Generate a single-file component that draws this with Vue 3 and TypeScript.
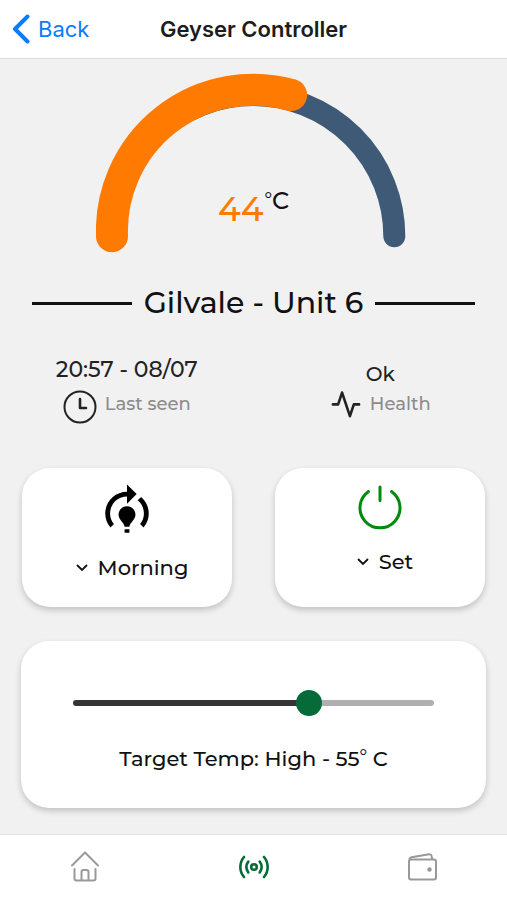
<script setup lang="ts">
import { computed, ref } from 'vue'

const current = 44
const program = ref('Morning')
const mode = ref('Set')
const target = ref(55)
const minTarget = 25
const maxTarget = 70

const level = computed(() => (target.value >= 55 ? 'High' : target.value >= 40 ? 'Medium' : 'Low'))
const fraction = computed(() => (target.value - minTarget) / (maxTarget - minTarget))
</script>

<template>
  <div class="screen">
    <header class="bar">
      <a class="back" href="#">
        <svg width="18" height="30" viewBox="0 0 18 30" aria-hidden="true">
          <path d="M15.5 2.5 3 15l12.5 12.5" fill="none" stroke="currentColor" stroke-width="4" stroke-linecap="round" stroke-linejoin="round" />
        </svg>
        <span>Back</span>
      </a>
      <h1>Geyser Controller</h1>
    </header>

    <main>
      <section class="gauge">
        <svg viewBox="0 0 314 180" aria-hidden="true">
          <path d="M16 163A141 141 0 0 1 298 163" fill="none" stroke="#3f5a77" stroke-width="22" stroke-linecap="round" />
          <path d="M16 163A141 141 0 0 1 195 22" fill="none" stroke="#ff7a00" stroke-width="32" stroke-linecap="round" />
        </svg>
        <p class="reading"><span class="value">{{ current }}</span><span class="unit"><span class="degree">°</span>C</span></p>
      </section>

      <h2 class="unit-name"><span>Gilvale - Unit 6</span></h2>

      <section class="status">
        <div class="fact">
          <p class="fact-value">20:57 - 08/07</p>
          <p class="fact-label">
            <svg width="34" height="34" viewBox="0 0 34 34" aria-hidden="true">
              <g fill="none" stroke="currentColor" stroke-width="2" stroke-linecap="round" stroke-linejoin="round">
                <circle cx="17" cy="17" r="15.5" />
                <path d="M17 9v9h6" stroke-width="2.6" />
              </g>
            </svg>
            <span>Last seen</span>
          </p>
        </div>
        <div class="fact">
          <p class="fact-value short">Ok</p>
          <p class="fact-label">
            <svg width="32" height="34" viewBox="0 1 24 26" aria-hidden="true">
              <path d="M22 12h-4l-3 9L9 3l-3 9H2" fill="none" stroke="currentColor" stroke-width="2" stroke-linecap="round" stroke-linejoin="round" />
            </svg>
            <span>Health</span>
          </p>
        </div>
      </section>

      <section class="cards">
        <div class="card tile">
          <svg width="58" height="58" viewBox="0 0 24 24" aria-hidden="true">
            <path d="M15.5 13.5c0 2-2.5 3.5-2.5 5h-2c0-1.5-2.5-3-2.5-5 0-1.93 1.57-3.5 3.5-3.5s3.5 1.57 3.5 3.5zM13 19.5h-2V21h2v-1.5zM19 13c0 1.68-.59 3.21-1.58 4.42l1.42 1.42C20.18 17.27 21 15.23 21 13c0-2.74-1.23-5.19-3.16-6.84l-1.42 1.42C17.99 8.86 19 10.82 19 13zM16 5l-4-4v3c-4.97 0-9 4.03-9 9 0 2.23.82 4.27 2.16 5.84l1.42-1.42C5.59 16.21 5 14.68 5 13c0-3.86 3.14-7 7-7v3l4-4z" />
          </svg>
          <label class="choice">
            <svg width="12" height="8" viewBox="0 0 12 8" aria-hidden="true"><path d="M1.5 1.5 6 6l4.500-4.500" fill="none" stroke="currentColor" stroke-width="1.800" stroke-linecap="round" /></svg>
            <select v-model="program" aria-label="Program">
              <option>Morning</option>
              <option>Evening</option>
            </select>
          </label>
        </div>
        <div class="card tile">
          <svg class="power" width="48" height="48" viewBox="0 0 48 48" aria-hidden="true">
            <path d="M12.500 7.500A20 20 0 1 0 35.500 7.500M24 3v13.500" fill="none" stroke="#008a0c" stroke-width="3" stroke-linecap="round" />
          </svg>
          <label class="choice">
            <svg width="12" height="8" viewBox="0 0 12 8" aria-hidden="true"><path d="M1.500 1.500 6 6l4.500-4.500" fill="none" stroke="currentColor" stroke-width="1.800" stroke-linecap="round" /></svg>
            <select v-model="mode" aria-label="Power mode">
              <option>Set</option>
              <option>Off</option>
            </select>
          </label>
        </div>
      </section>

      <section class="card target">
        <input
          id="target"
          v-model.number="target"
          type="range"
          :min="minTarget"
          :max="maxTarget"
          :style="{ '--fraction': fraction }"
        />
        <label for="target">Target Temp: {{ level }} - {{ target }}<span class="degree">°</span> C</label>
      </section>
    </main>

    <nav class="tabs">
      <a href="#" aria-label="Home">
        <svg width="32" height="32" viewBox="0 0 32 32" aria-hidden="true">
          <path d="M3 14.500 16 1.500 29 14.500M5.500 18v9.500a2 2 0 0 0 2 2h17a2 2 0 0 0 2-2V18M12.500 29.500V21a2 2 0 0 1 2-2h3a2 2 0 0 1 2 2v8.500" fill="none" stroke="currentColor" stroke-width="2" stroke-linecap="round" stroke-linejoin="round" />
        </svg>
      </a>
      <a href="#" class="active" aria-label="Controller" aria-current="page">
        <svg width="32" height="32" viewBox="0 0 32 32" aria-hidden="true">
          <g fill="none" stroke="currentColor" stroke-width="2.600" stroke-linecap="round">
            <circle cx="16" cy="16" r="2.800" />
            <path d="M10.300 10.500a9.500 9.500 0 0 0 0 11M21.700 10.500a9.500 9.500 0 0 1 0 11M6 6a15.500 15.500 0 0 0 0 20M26 6a15.500 15.500 0 0 1 0 20" />
          </g>
        </svg>
      </a>
      <a href="#" aria-label="Wallet">
        <svg width="32" height="32" viewBox="0 0 32 32" aria-hidden="true">
          <g fill="none" stroke="currentColor" stroke-width="2" stroke-linejoin="round">
            <rect x="2" y="8.500" width="27" height="20" rx="2" />
            <path d="M2.500 8.500c0-1.500.500-2 2-2.300L22 3.200c1.500-.200 2.300.300 2.600 1.800l.600 3.500" />
          </g>
          <circle cx="22.500" cy="18.500" r="2.200" fill="currentColor" />
        </svg>
      </a>
    </nav>
  </div>
</template>

<style>
body {
  margin: 0;
}
</style>

<style scoped>
.screen {
  display: flex;
  flex-direction: column;
  min-height: 100vh;
  background: #f1f1f1;
  color: #111;
  font-family: Montserrat, Inter, sans-serif;
  font-weight: 500;
}

h1,
h2,
p {
  margin: 0;
  font-weight: inherit;
}

svg {
  display: block;
  flex: none;
}

.bar {
  display: grid;
  grid-template-columns: 1fr auto 1fr;
  align-items: center;
  height: 59px;
  padding: 0 12px;
  border-bottom: 1px solid #dcdcdc;
  background: #fff;
  box-sizing: border-box;
  font-family: Inter, sans-serif;
}

.back {
  display: flex;
  align-items: center;
  gap: 8px;
  color: #0a7cff;
  font-size: 22px;
  font-weight: 400;
  text-decoration: none;
}

.bar h1 {
  font-size: 22px;
  font-weight: 600;
  color: #1c1c1c;
}

main {
  display: flex;
  flex: 1;
  flex-direction: column;
}

.gauge {
  display: grid;
  justify-items: center;
  padding-top: 14px;
}

.gauge svg,
.reading {
  grid-area: 1 / 1;
}

.gauge svg {
  width: 62%;
}

.reading {
  display: flex;
  align-self: end;
  align-items: flex-start;
  gap: 1px;
  padding-bottom: 24px;
}

.value {
  padding-top: 4px;
  color: #ff7a00;
  font-size: 34px;
  line-height: 40px;
}

.unit {
  font-size: 24px;
  line-height: 32px;
}

.degree {
  font-size: 18px;
  vertical-align: 4px;
  line-height: 1;
}

.unit-name {
  display: flex;
  align-items: center;
  gap: 12px;
  padding: 0 32px;
  margin-top: 30px;
  font-size: 30px;
  line-height: 40px;
}

.unit-name::before,
.unit-name::after {
  flex: 1;
  height: 3px;
  background: #111;
  content: '';
}

.status {
  display: grid;
  grid-template-columns: 1fr 1fr;
  margin-top: 33px;
}

.fact {
  display: flex;
  flex-direction: column;
  align-items: center;
  justify-content: space-between;
  height: 68px;
  color: #222;
}

.fact-value {
  font-size: 22px;
  line-height: 28px;
}

.short {
  padding-top: 4px;
  font-size: 20px;
}

.fact-label {
  display: flex;
  align-items: flex-start;
  gap: 8px;
  font-size: 18px;
  line-height: 28px;
}

.fact-label span {
  color: #8c8c8c;
}

.cards {
  display: grid;
  grid-template-columns: 1fr 1fr;
  gap: 43px;
  padding: 0 22px;
  margin-top: 44px;
}

.card {
  border-radius: 28px;
  background: #fff;
  box-shadow: 0 3px 6px rgba(0, 0, 0, 0.2);
  box-sizing: border-box;
}

.tile {
  display: flex;
  flex-direction: column;
  align-items: center;
  gap: 13px;
  height: 139px;
  padding-top: 14px;
}

.power {
  margin: 2px 0;
}

.choice {
  display: flex;
  align-items: center;
  gap: 10px;
  padding-left: 10px;
}

select {
  padding: 0;
  border: 0;
  appearance: none;
  background: none;
  color: inherit;
  field-sizing: content;
  font: inherit;
  font-size: 21px;
  line-height: 30px;
}

.target {
  display: flex;
  flex-direction: column;
  align-items: center;
  gap: 28px;
  height: 167px;
  padding: 49px 52px 0;
  margin: 34px 21px 26px;
  font-size: 21px;
  line-height: 30px;
}

input {
  width: 100%;
  height: 26px;
  margin: 0;
  appearance: none;
  background: none;
}

input::-webkit-slider-runnable-track {
  --stop: calc(13px + var(--fraction) * (100% - 26px));
  height: 6px;
  border-radius: 3px;
  background: linear-gradient(to right, #363436 var(--stop), #b0b0b0 var(--stop));
}

input::-webkit-slider-thumb {
  width: 26px;
  height: 26px;
  margin-top: -10px;
  border-radius: 50%;
  appearance: none;
  background: #066b38;
}

.tabs {
  display: grid;
  grid-template-columns: repeat(3, 1fr);
  height: 66px;
  padding-bottom: 2px;
  border-top: 1px solid #e2e2e2;
  background: #fff;
  box-sizing: border-box;
}

.tabs a {
  display: flex;
  align-items: center;
  justify-content: center;
  color: #999;
}

.tabs .active {
  color: #066b38;
}
</style>
